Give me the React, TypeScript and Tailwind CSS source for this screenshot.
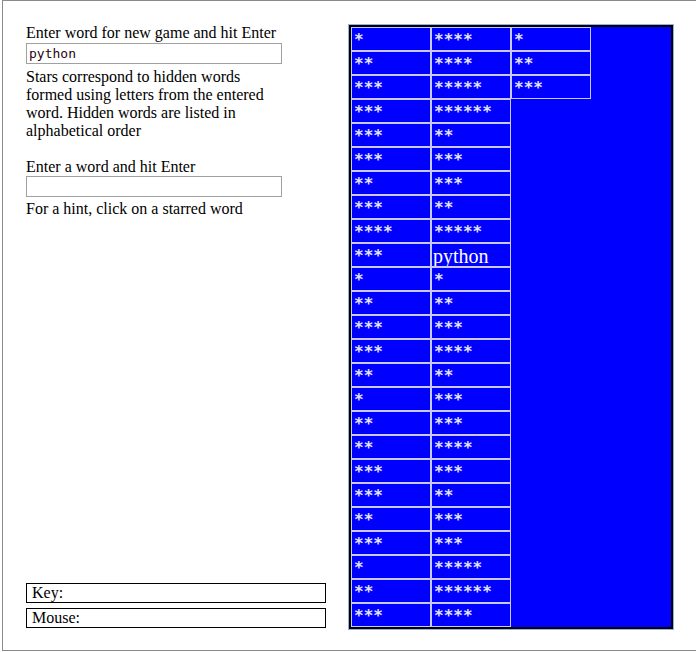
import React from "react";

const col1 = ["*","**","***","***","***","***","**","***","****","***","*","**","***","***","**","*","**","**","***","***","**","***","*","**","***"];
const col2 = ["****","****","*****","******","**","***","***","**","*****","python","*","**","***","****","**","***","***","****","***","**","***","***","*****","******","****"];
const col3 = ["*","**","***"];

function Cell({ text }: { text: string }) {
  const isWord = !text.startsWith("*");
  return (
    <div className="w-[80px] h-[24px] border border-[#c8c8ff] overflow-hidden">
      {isWord ? (
        <span className="block pl-[1px] pt-[2px] text-[20px] leading-[20px] text-white" style={{ fontFamily: '"Liberation Serif", serif' }}>{text}</span>
      ) : (
        <span className="block pl-[2px] pt-[3px] text-[16px] leading-[18px] font-bold text-[#e4e4ff]" style={{ fontFamily: '"DejaVu Sans Mono", monospace' }}>{text}</span>
      )}
    </div>
  );
}

export default function App() {
  const items = [...col1, ...col2, ...col3];
  return (
    <div className="w-[696px] h-[652px] overflow-hidden bg-white">
      <div
        className="ml-[2px] w-[720px] h-[651px] border border-r-0 border-[#8a8a8a] flex text-black"
        style={{ fontFamily: '"Liberation Serif", "Times New Roman", serif' }}
      >
        <div className="w-[345px] pl-[23px] pt-[23px] pb-[22px] flex flex-col text-[16px] leading-[18px]">
          <div>Enter word for new game and hit Enter</div>
          <div className="mt-[1px] w-[256px] h-[21px] border border-[#a0a0a0] pl-[2px] flex items-center text-[13px] text-[#2a0010]" style={{ fontFamily: '"DejaVu Sans Mono", monospace' }}>python</div>
          <div className="mt-[4px] whitespace-nowrap">
            Stars correspond to hidden words<br />
            formed using letters from the entered<br />
            word. Hidden words are listed in<br />
            alphabetical order
          </div>
          <div className="h-[18px]" />
          <div>Enter a word and hit Enter</div>
          <div className="w-[256px] h-[21px] border border-[#a0a0a0]" />
          <div className="mt-[3px]">For a hint, click on a starred word</div>
          <div className="mt-auto flex flex-col gap-[5px]">
            <div className="w-[300px] h-[20px] border border-black pl-[5px] leading-[18px]">Key:</div>
            <div className="w-[300px] h-[20px] border border-black pl-[5px] leading-[18px]">Mouse:</div>
          </div>
        </div>
        <div className="mt-[23px] self-start border border-[#90b0e8]">
          <div className="border-2 border-black bg-[#0000ff] w-[324px] h-[604px]">
            <div className="grid grid-flow-col grid-rows-[repeat(25,24px)] grid-cols-[repeat(4,80px)]">
              {items.map((t, i) => (
                <Cell key={i} text={t} />
              ))}
            </div>
          </div>
        </div>
      </div>
    </div>
  );
}
